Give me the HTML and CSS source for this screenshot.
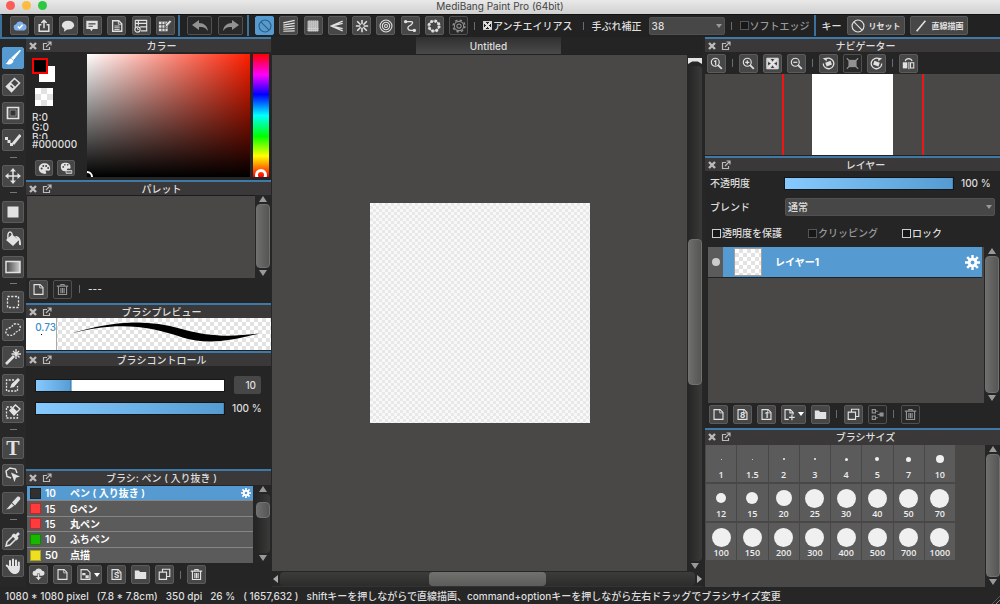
FILE: index.html
```html
<!DOCTYPE html>
<html lang="ja">
<head>
<meta charset="utf-8">
<title>MediBang Paint Pro (64bit)</title>
<link rel="stylesheet" href="styles.css">
</head>
<body>
<svg class="sprite" aria-hidden="true">
  <defs><linearGradient id="gg"><stop stop-color="#444"/><stop offset="1" stop-color="#ccc"/></linearGradient></defs>
  <symbol id="cloud" viewBox="0 0 16 16"><path d="M4 13a3.500 3.500 0 0 1-.5-6.900A4.500 4.500 0 0 1 12 5.500 3.800 3.800 0 0 1 12.500 13z" fill="#7fb0ea"/><path d="M5.500 8.500l2 2 3.500-4" fill="none" stroke="#fff" stroke-width="1.800"/></symbol>
  <symbol id="share" viewBox="0 0 16 16"><path d="M5 6.500H2.500v7.500h11V6.500H11M8 10.500V2M5 4.500L8 1.500l3 3" fill="none" stroke="currentColor" stroke-width="1.700"/></symbol>
  <symbol id="bubble" viewBox="0 0 16 16"><ellipse cx="8" cy="7" rx="7" ry="5" fill="currentColor"/><path d="M4 10l-.5 4.500L8 11z" fill="currentColor"/></symbol>
  <symbol id="note" viewBox="0 0 16 16"><path d="M1.500 2h13v9.500H9L7 14l-1-2.500H1.500z" fill="currentColor"/><path d="M4 5.500h8M4 8.300h5" stroke="#444" stroke-width="1.300"/></symbol>
  <symbol id="doc" viewBox="0 0 16 16"><path d="M3 2h7l3.500 3.500V14H3z" fill="none" stroke="currentColor" stroke-width="1.500"/><path d="M9.500 2v4h4M5 8h6M5 10h6M5 12h6" fill="none" stroke="currentColor"/></symbol>
  <symbol id="history" viewBox="0 0 16 16"><path d="M1.500 1.500h13v12H8M1.500 9V1.500M5 1.500v6M1.500 5h13M7 9h7" fill="none" stroke="currentColor" stroke-width="1.300"/><circle cx="4" cy="12" r="3" fill="#444" stroke="currentColor" stroke-width="1.300"/><path d="M4 10v2h1.500" fill="none" stroke="currentColor"/></symbol>
  <symbol id="gridpen" viewBox="0 0 16 16"><path d="M1 3h10v11H1z" fill="currentColor"/><path d="M1 6.500h10M1 10.500h10M4.500 3v11M8 3v11" stroke="#444"/><path d="M8 9.500l.8-3.500 4.700-5 2 2-5 5.500z" fill="currentColor" stroke="#444" stroke-width=".8"/></symbol>
  <symbol id="undo" viewBox="0 0 18 14"><path d="M1 6l7-5v3c5 0 8.500 3 9 8-3-4-5-4-9-4v3z" fill="currentColor"/></symbol>
  <symbol id="redo" viewBox="0 0 18 14"><path d="M17 6l-7-5v3C5 4 1.500 7 1 12c3-4 5-4 9-4v3z" fill="currentColor"/></symbol>
  <symbol id="off" viewBox="0 0 16 16"><circle cx="8" cy="8" r="6.800" fill="none" stroke="currentColor" stroke-width="1.300"/><path d="M3.300 3.300l9.400 9.400" stroke="currentColor" stroke-width="1.300"/></symbol>
  <symbol id="parallel" viewBox="0 0 16 16"><path d="M1.500 4.500l13-3M1.500 7l13-2.200M1.500 9.300l13-1.400M1.500 11.700l13-.9M1.500 14l13-.5" stroke="currentColor" stroke-width="1.400"/></symbol>
  <symbol id="mesh" viewBox="0 0 16 16"><path d="M1.500 3.500h13M1.500 5.800h13M1.500 8.100h13M1.500 10.400h13M1.500 12.700h13M3.500 1.500v13M5.800 1.500v13M8.100 1.500v13M10.400 1.500v13M12.700 1.500v13" stroke="currentColor" stroke-width="1.200"/></symbol>
  <symbol id="vanish" viewBox="0 0 16 16"><path d="M14.500 2.500L1.500 8l13 5.500M14.500 5L1.500 8l13 3" fill="none" stroke="currentColor" stroke-width="1.500"/></symbol>
  <symbol id="radial" viewBox="0 0 16 16"><path d="M8 1v5M8 10v5M1 8h5M10 8h5M2.500 2.500l4 4M9.500 9.500l4 4M13.500 2.500l-4 4M6.500 9.500l-4 4" stroke="currentColor" stroke-width="1.800"/></symbol>
  <symbol id="rings" viewBox="0 0 16 16"><g fill="none" stroke="currentColor" stroke-width="1.200"><circle cx="8" cy="8" r="6.800"/><circle cx="8" cy="8" r="4.200"/><circle cx="8" cy="8" r="1.700"/></g></symbol>
  <symbol id="curve" viewBox="0 0 16 16"><path d="M3 3h6c4 0 1 4-2 5-3 2-1 5 2 5h4" fill="none" stroke="currentColor" stroke-width="1.500"/><circle cx="3" cy="3" r="1.900" fill="currentColor"/><circle cx="13" cy="13" r="1.900" fill="currentColor"/></symbol>
  <symbol id="ringdots" viewBox="0 0 16 16"><circle cx="8" cy="8" r="5.800" fill="none" stroke="currentColor" stroke-width="1.200"/><circle cx="8" cy="8" r="5.800" fill="none" stroke="currentColor" stroke-width="3.400" stroke-dasharray="2.400 2.150"/></symbol>
  <symbol id="gearline" viewBox="0 0 16 16"><circle cx="8" cy="8" r="5.300" fill="none" stroke="currentColor" stroke-width="1.200"/><circle cx="8" cy="8" r="2.400" fill="none" stroke="currentColor" stroke-width="1.200"/><circle cx="8" cy="8" r="6.800" fill="none" stroke="currentColor" stroke-width="1.500" stroke-dasharray="2.670 2.670"/></symbol>
  <symbol id="line" viewBox="0 0 16 16"><path d="M3 14L13 2" stroke="currentColor" stroke-width="1.800"/></symbol>
  <symbol id="close" viewBox="0 0 10 10"><path d="M2 2l6 6M8 2L2 8" stroke="currentColor" stroke-width="2.400"/></symbol>
  <symbol id="pop" viewBox="0 0 10 10"><path d="M5 2.500H1.500v6h6V6M4 6l4.500-4.500M5.500 1H9v3.500" fill="none" stroke="currentColor" stroke-width="1.200"/></symbol>
  <symbol id="brush" viewBox="0 0 16 16"><path d="M15.500.5l-7 9L6.500 8l8-7.500z" fill="currentColor" stroke="currentColor"/><path d="M6 8.500l2.500 2C8.500 14 4 15.500.5 13.500 3.500 13 2.500 9 6 8.500z" fill="currentColor"/></symbol>
  <symbol id="eraser" viewBox="0 0 16 16"><path d="M9.500 1.500l5 4.500-8 8.500-5-5z" fill="none" stroke="currentColor" stroke-width="1.600"/><path d="M5.800 5.500l5 4.700-4.300 4.300-5-5z" fill="currentColor"/><path d="M5.500 8.500l2.500 2.300" stroke="#444" stroke-width="1.500"/></symbol>
  <symbol id="square" viewBox="0 0 16 16"><path d="M2.500 2.500h11v11h-11z" fill="none" stroke="currentColor" stroke-width="1.700"/><path d="M5 5h6v6H5z" fill="#333" stroke="#888"/></symbol>
  <symbol id="dotpen" viewBox="0 0 16 16"><path d="M0 5h3v3H0zM2.500 8h3v3h-3zM5 11h3v3H5z" fill="currentColor"/><path d="M15.500 3l-7.500 9" stroke="currentColor" stroke-width="2.800"/></symbol>
  <symbol id="move" viewBox="0 0 16 16"><path d="M8 2v12M2 8h12" stroke="currentColor" stroke-width="1.500"/><path d="M8 0l3 3.500H5zM8 16l3-3.500H5zM0 8l3.500-3v6zM16 8l-3.500-3v6z" fill="currentColor"/></symbol>
  <symbol id="solid" viewBox="0 0 16 16"><path d="M2.500 2.500h11v11h-11z" fill="currentColor"/></symbol>
  <symbol id="bucket" viewBox="0 0 16 16"><path d="M1 9l6-5.500L14 9l-6 6z" fill="currentColor"/><path d="M3 8c-.5-4 0-7 2-7s2.500 3 2.500 6" fill="none" stroke="currentColor" stroke-width="1.400"/><path d="M10 5c4 0 6 2 6 9-2 1-2.500-1-2-4z" fill="currentColor"/></symbol>
  <symbol id="grad" viewBox="0 0 16 16"><path d="M1 2.500h14v11H1z" fill="url(#gg)" stroke="currentColor" stroke-width="1.500"/></symbol>
  <symbol id="select" viewBox="0 0 16 16"><path d="M2.500 2.500h11v11h-11z" fill="none" stroke="currentColor" stroke-width="1.300" stroke-dasharray="2.200 1.470"/></symbol>
  <symbol id="lasso" viewBox="0 0 16 16"><path d="M9 2c5-1 7 2 6 5s-4 2-5 4-4 3-7 2-3-6 1-7 3-3 5-4z" fill="none" stroke="currentColor" stroke-width="1.300" stroke-dasharray="2 1.300"/></symbol>
  <symbol id="wand" viewBox="0 0 16 16"><path d="M1 15l8-8" stroke="currentColor" stroke-width="2.600"/><path d="M11 0v4M11 6v4M6.500 5H9M13 5h3M8 2l2 2M12.500 6.500l2 2M14 2l-2 2" stroke="currentColor" stroke-width="1.300"/><circle cx="11" cy="5" r="2" fill="currentColor"/></symbol>
  <symbol id="selpen" viewBox="0 0 16 16"><path d="M9 3H1.500v11h11V9" fill="none" stroke="currentColor" stroke-width="1.300" stroke-dasharray="2 1.300"/><path d="M5 11l1.500-4L13 1l2 2-6 7z" fill="currentColor"/></symbol>
  <symbol id="selerase" viewBox="0 0 16 16"><path d="M7 3H1.500v11h11V10" fill="none" stroke="currentColor" stroke-width="1.300" stroke-dasharray="2 1.300"/><path d="M10.500 1l4.500 4-6 6-4-4.500z" fill="#444" stroke="currentColor" stroke-width="1.500"/><path d="M8 3.500l4.500 4.200L9 11 5 6.500z" fill="currentColor"/></symbol>
  <symbol id="poly" viewBox="0 0 16 16"><path d="M6 11L2 9.500 1 4l4-3 5.500 1L12 6" fill="none" stroke="currentColor" stroke-width="1.400"/><path d="M6 5.500l9 4-4 1.300L9.500 15z" fill="currentColor"/></symbol>
  <symbol id="knife" viewBox="0 0 16 16"><path d="M7 7.500L12.500 1.500c2-.5 3.500 1 2.500 3l-5 6z" fill="currentColor"/><path d="M6.500 8l3 2.800L5 14l-4.500 1z" fill="currentColor" stroke="#444" stroke-width=".7"/></symbol>
  <symbol id="dropper" viewBox="0 0 16 16"><path d="M9.500 3.500l3 3L5 14l-4 1 1-4z" fill="none" stroke="currentColor" stroke-width="1.500"/><path d="M7.500 3.500l5 5M10.500 5.500L14 2" stroke="currentColor" stroke-width="2.600"/></symbol>
  <symbol id="hand" viewBox="0 0 16 16"><path d="M5 8.500V3M8 8V1.500M11 8V2.500M13.800 9V4.500M5.500 11L1.800 7.500" stroke="currentColor" stroke-width="2" stroke-linecap="round"/><path d="M4 8h10.800v2.500c0 3-2 5.500-4.800 5.500-3 0-4.500-1.500-7-5.500z" fill="currentColor"/></symbol>
  <symbol id="palette" viewBox="0 0 16 16"><path d="M8 1.500c4 0 7 2.500 7 6.500 0 3-2 3-4 2.500S9 11 10 12.500 9 15 7.500 14.500C4 14 1 12 1 8s3-6.500 7-6.500z" fill="currentColor"/><g fill="#444"><circle cx="4.500" cy="8" r="1.300"/><circle cx="6.500" cy="4.800" r="1.200"/><circle cx="10" cy="4.800" r="1.200"/><circle cx="12.500" cy="7.500" r="1.200"/></g></symbol>
  <symbol id="palettebar" viewBox="0 0 16 16"><path d="M7 1c4 0 6 2 6 5s-2 2-3 2-2 1-1 3c-5 1-8-1-8-5s2-5 6-5z" fill="currentColor"/><g fill="#444"><circle cx="4" cy="6" r="1.100"/><circle cx="6" cy="3.500" r="1"/><circle cx="9.500" cy="3.500" r="1"/></g><path d="M7.500 10.500h7V14h-7z" fill="#777" stroke="currentColor"/></symbol>
  <symbol id="page" viewBox="0 0 16 16"><path d="M2.500 2h7.500l3.500 3.500V14h-11z" fill="none" stroke="currentColor" stroke-width="1.400"/><path d="M9.500 2v4h4" fill="none" stroke="currentColor"/></symbol>
  <symbol id="trash" viewBox="0 0 16 16"><path d="M1 3.800h14M6 4V1.800h4V4M3 4v10.200h10V4M6 6v6.500M8 6v6.500M10 6v6.500" fill="none" stroke="currentColor" stroke-width="1.400"/></symbol>
  <symbol id="cloudget" viewBox="0 0 16 16"><path d="M3.500 9.500a3 3 0 0 1 .5-6 4.500 4.500 0 0 1 8.500 0 3 3 0 0 1 0 6z" fill="currentColor"/><path d="M6.700 7h2.600v4h2.700l-4 4.500L4 11h2.700z" stroke="#444" stroke-width=".7" fill="currentColor"/></symbol>
  <symbol id="folder" viewBox="0 0 16 16"><path d="M1 3h5l1.500 2H15v8.500H1z" fill="currentColor"/></symbol>
  <symbol id="copy" viewBox="0 0 16 16"><path d="M5.500 1.500h9v9h-9z" fill="none" stroke="currentColor" stroke-width="1.400"/><path d="M1.500 5h9v9h-9z" fill="#444" stroke="currentColor" stroke-width="1.400"/></symbol>
  <symbol id="pagemix" viewBox="0 0 16 16"><path d="M2.500 2h7.500l3.500 3.500V14h-11z" fill="none" stroke="currentColor" stroke-width="1.400"/><path d="M4 6h4v3H4zM8 9h4v3.500H8z" fill="currentColor"/></symbol>
  <symbol id="pageadd" viewBox="0 0 16 16"><path d="M7 14H2.500V2H9l3.500 3.500V8M8.500 2v4h4M11 8v7M7.500 11.500h7" fill="none" stroke="currentColor" stroke-width="1.400"/></symbol>
  <symbol id="merge" viewBox="0 0 16 16"><path d="M1.500 2h4v4h-4zM1.500 10h4v4h-4zM6 4h2.500M6 12h2.500M8 8h3" fill="none" stroke="currentColor" stroke-width="1.300"/><path d="M10.500 5.500h5v5h-5z" fill="currentColor"/></symbol>
  <symbol id="lens" viewBox="0 0 16 16"><circle cx="6.500" cy="6.500" r="4.900" fill="none" stroke="currentColor" stroke-width="1.400"/><path d="M10 10l4.500 4.500" stroke="currentColor" stroke-width="2.200"/></symbol>
  <symbol id="one" viewBox="0 0 16 16"><use href="#lens"/><path d="M5 5.500l2-1V10" fill="none" stroke="currentColor" stroke-width="1.500"/></symbol>
  <symbol id="plus" viewBox="0 0 16 16"><use href="#lens"/><path d="M4 6.500h5M6.500 4v5" stroke="currentColor" stroke-width="1.500"/></symbol>
  <symbol id="minus" viewBox="0 0 16 16"><use href="#lens"/><path d="M4 6.500h5" stroke="currentColor" stroke-width="1.500"/></symbol>
  <symbol id="fit" viewBox="0 0 16 16"><path d="M1 1.500h14v13H1z" fill="#ccc" stroke="currentColor" stroke-width="1.200"/><path d="M6 2.500h4L8 5.500zM6 13.500h4l-2-3zM2.500 6v4L6 8zM13.500 6v4L10 8z" fill="#3a3a3a"/><path d="M3 3l10 10M13 3L3 13" stroke="#f2f2f2" stroke-width="1.300"/></symbol>
  <symbol id="rotl" viewBox="0 0 16 16"><path d="M4 2.800A6.500 6.500 0 1 1 1.500 8" fill="none" stroke="currentColor" stroke-width="1.600"/><path d="M1 1.500l4.500-.5.500 4.500z" fill="currentColor"/><path d="M4 7l6.500-2.300 1.700 4.600-6.500 2.300z" fill="currentColor"/></symbol>
  <symbol id="rotr" viewBox="0 0 16 16"><path d="M12 2.800A6.500 6.500 0 1 0 14.500 8" fill="none" stroke="currentColor" stroke-width="1.600"/><path d="M15 1.500l-4.500-.5-.5 4.500z" fill="currentColor"/><path d="M12 7L5.500 4.700 3.800 9.300l6.500 2.300z" fill="currentColor"/></symbol>
  <symbol id="reset" viewBox="0 0 16 16"><path d="M3 3.500h10v9H3z" fill="currentColor"/><path d="M1 1.500l3 3M15 1.500l-3 3M1 14.500l3-3M15 14.500l-3-3" stroke="currentColor" stroke-width="1.500"/></symbol>
  <symbol id="flip" viewBox="0 0 16 16"><path d="M1 6.500h5.500V14H1z" fill="currentColor"/><path d="M10.500 7h4v6.500h-4zM4 5c1-4 7-4 8.500 0M8.500 6v9" fill="none" stroke="currentColor" stroke-width="1.300"/></symbol>
  <symbol id="gear" viewBox="0 0 16 16"><circle cx="8" cy="8" r="3.600" fill="none" stroke="currentColor" stroke-width="3"/><path d="M8 0v4M8 12v4M0 8h4M12 8h4M2.300 2.300l3 3M10.700 10.700l3 3M13.700 2.300l-3 3M5.300 10.700l-3 3" stroke="currentColor" stroke-width="2.600"/></symbol>
</svg>

<div class="app">
  <header class="titlebar">
    <div class="lights"><i class="red"></i><i class="amber"></i><i class="green"></i></div>
    <h1>MediBang Paint Pro (64bit)</h1>
  </header>

  <div class="toolbar">
    <div class="group files">
      <button class="btn" aria-label="クラウド"><svg><use href="#cloud"/></svg></button>
      <button class="btn" aria-label="共有"><svg><use href="#share"/></svg></button>
      <button class="btn" aria-label="コメント"><svg><use href="#bubble"/></svg></button>
      <button class="btn" aria-label="メモ"><svg><use href="#note"/></svg></button>
      <button class="btn" aria-label="文書"><svg><use href="#doc"/></svg></button>
      <button class="btn" aria-label="履歴"><svg><use href="#history"/></svg></button>
      <button class="btn" aria-label="編集"><svg><use href="#gridpen"/></svg></button>
    </div>
    <div class="group undo">
      <button class="btn dark wide" aria-label="元に戻す"><svg><use href="#undo"/></svg></button>
      <button class="btn dark wide" aria-label="やり直す"><svg><use href="#redo"/></svg></button>
    </div>
    <div class="group snaps">
      <button class="btn on" aria-label="スナップオフ"><svg><use href="#off"/></svg></button>
      <button class="btn" aria-label="平行"><svg><use href="#parallel"/></svg></button>
      <button class="btn" aria-label="十字"><svg><use href="#mesh"/></svg></button>
      <button class="btn" aria-label="消失点"><svg><use href="#vanish"/></svg></button>
      <button class="btn" aria-label="集中線"><svg><use href="#radial"/></svg></button>
      <button class="btn" aria-label="同心円"><svg><use href="#rings"/></svg></button>
      <button class="btn" aria-label="曲線"><svg><use href="#curve"/></svg></button>
      <button class="btn" aria-label="楕円"><svg><use href="#ringdots"/></svg></button>
      <button class="btn dark" aria-label="スナップ設定"><svg><use href="#gearline"/></svg></button>
    </div>
    <div class="options">
      <span class="sep"></span>
      <label class="check"><input type="checkbox" checked>アンチエイリアス</label>
      <span class="sep"></span>
      <label for="stab">手ぶれ補正</label>
      <span class="drop stab"><select id="stab"><option>38</option></select></span>
      <span class="sep"></span>
      <label class="check dim"><input type="checkbox" disabled>ソフトエッジ</label>
    </div>
    <div class="keys">
      <span>キー</span>
      <button class="btn labelled"><svg><use href="#off"/></svg>リセット</button>
      <button class="btn labelled"><svg><use href="#line"/></svg>直線描画</button>
    </div>
  </div>

  <main class="work">
    <nav class="tools" aria-label="ツール">
      <button class="btn on" aria-label="ブラシ"><svg><use href="#brush"/></svg></button>
      <button class="btn" aria-label="消しゴム"><svg><use href="#eraser"/></svg></button>
      <button class="btn" aria-label="図形"><svg><use href="#square"/></svg></button>
      <button class="btn" aria-label="ドット"><svg><use href="#dotpen"/></svg></button>
      <i></i>
      <button class="btn" aria-label="移動"><svg><use href="#move"/></svg></button>
      <i></i>
      <button class="btn" aria-label="塗り"><svg><use href="#solid"/></svg></button>
      <button class="btn" aria-label="バケツ"><svg><use href="#bucket"/></svg></button>
      <button class="btn" aria-label="グラデーション"><svg><use href="#grad"/></svg></button>
      <i></i>
      <button class="btn" aria-label="選択"><svg><use href="#select"/></svg></button>
      <button class="btn" aria-label="投げなわ"><svg><use href="#lasso"/></svg></button>
      <button class="btn" aria-label="自動選択"><svg><use href="#wand"/></svg></button>
      <button class="btn" aria-label="選択ペン"><svg><use href="#selpen"/></svg></button>
      <button class="btn" aria-label="選択消し"><svg><use href="#selerase"/></svg></button>
      <i></i>
      <button class="btn letter" aria-label="テキスト">T</button>
      <button class="btn" aria-label="操作"><svg><use href="#poly"/></svg></button>
      <button class="btn" aria-label="分割"><svg><use href="#knife"/></svg></button>
      <i></i>
      <button class="btn" aria-label="スポイト"><svg><use href="#dropper"/></svg></button>
      <button class="btn" aria-label="手のひら"><svg><use href="#hand"/></svg></button>
    </nav>

    <div class="side left">
      <section class="panel color">
        <div class="head"><svg><use href="#close"/></svg><svg><use href="#pop"/></svg><h2>カラー</h2></div>
        <div class="colorbody">
          <div class="colorinfo">
            <div class="swatches"><i class="back"></i><i class="fore"></i></div>
            <i class="clear checker"></i>
            <div class="rgb"><span>R:0</span><span>G:0</span><span>B:0</span></div>
            <div class="hex">#000000</div>
            <div class="pair">
              <button class="btn" aria-label="パレット"><svg><use href="#palette"/></svg></button>
              <button class="btn" aria-label="パレット追加"><svg><use href="#palettebar"/></svg></button>
            </div>
          </div>
          <div class="field"><i></i></div>
          <div class="hue"><i></i></div>
        </div>
      </section>

      <section class="panel palette">
        <div class="head"><svg><use href="#close"/></svg><svg><use href="#pop"/></svg><h2>パレット</h2></div>
        <div class="listwrap">
          <div class="well"></div>
          <div class="vscroll"><div class="track"><i></i></div></div>
        </div>
        <div class="foot">
          <button class="btn" aria-label="追加"><svg><use href="#page"/></svg></button>
          <button class="btn dark" aria-label="削除"><svg><use href="#trash"/></svg></button>
          <span class="sep"></span><span>---</span>
        </div>
      </section>

      <section class="panel preview">
        <div class="head"><svg><use href="#close"/></svg><svg><use href="#pop"/></svg><h2>ブラシプレビュー</h2></div>
        <div class="previewbody checker">
          <div class="size">0.73<i></i></div>
          <svg viewBox="0 0 213 32" preserveAspectRatio="none"><path d="M14 15.500C52 4 86 0 124 11c28 8 50 8 77 4.500-30 8-53 11-76 4C92 8 60 3 14 15.500z"/></svg>
        </div>
      </section>

      <section class="panel control">
        <div class="head"><svg><use href="#close"/></svg><svg><use href="#pop"/></svg><h2>ブラシコントロール</h2></div>
        <div class="sliders">
          <input class="range" type="range" min="0" max="100" value="18" aria-label="ブラシ幅" style="--fill:19%"><output class="num">10</output>
          <input class="range" type="range" value="100" aria-label="ブラシ不透明度" style="--fill:100%"><output>100 %</output>
        </div>
      </section>

      <section class="panel brushes">
        <div class="head"><svg><use href="#close"/></svg><svg><use href="#pop"/></svg><h2>ブラシ: ペン ( 入り抜き )</h2></div>
        <div class="listwrap">
          <ul class="brushlist">
            <li class="current"><i class="c1"></i><b>10</b><span>ペン ( 入り抜き )</span><svg><use href="#gear"/></svg></li>
            <li><i class="c2"></i><b>15</b><span>Gペン</span></li>
            <li><i class="c2"></i><b>15</b><span>丸ペン</span></li>
            <li><i class="c3"></i><b>10</b><span>ふちペン</span></li>
            <li><i class="c4"></i><b>50</b><span>点描</span></li>
          </ul>
          <div class="vscroll"><div class="track"><i></i></div></div>
        </div>
        <div class="foot">
          <button class="btn" aria-label="ダウンロード"><svg><use href="#cloudget"/></svg></button>
          <button class="btn" aria-label="新規ブラシ"><svg><use href="#page"/></svg></button>
          <button class="btn menu" aria-label="画像ブラシ"><svg><use href="#pagemix"/></svg></button>
          <button class="btn stamped" aria-label="スクリプト"><svg><use href="#page"/></svg><em>S</em></button>
          <button class="btn" aria-label="フォルダ"><svg><use href="#folder"/></svg></button>
          <button class="btn" aria-label="複製"><svg><use href="#copy"/></svg></button>
          <span class="sep"></span>
          <button class="btn" aria-label="削除"><svg><use href="#trash"/></svg></button>
        </div>
      </section>
    </div>

    <div class="document">
      <div class="tabs"><button class="tab">Untitled</button></div>
      <div class="stage">
        <div class="canvasarea"><div class="paper"></div></div>
        <div class="vscroll"><div class="track"><i></i></div></div>
      </div>
      <div class="hscroll"><div class="track"><i></i></div></div>
    </div>

    <div class="side right">
      <section class="panel navigator">
        <div class="head"><svg><use href="#close"/></svg><svg><use href="#pop"/></svg><h2>ナビゲーター</h2></div>
        <div class="navbar">
          <button class="btn" aria-label="等倍"><svg><use href="#one"/></svg></button>
          <span class="sep"></span>
          <button class="btn" aria-label="拡大"><svg><use href="#plus"/></svg></button>
          <button class="btn" aria-label="全体表示"><svg><use href="#fit"/></svg></button>
          <button class="btn" aria-label="縮小"><svg><use href="#minus"/></svg></button>
          <span class="sep"></span>
          <button class="btn" aria-label="左回転"><svg><use href="#rotl"/></svg></button>
          <button class="btn dark" aria-label="回転リセット"><svg><use href="#reset"/></svg></button>
          <button class="btn" aria-label="右回転"><svg><use href="#rotr"/></svg></button>
          <span class="sep"></span>
          <button class="btn" aria-label="左右反転"><svg><use href="#flip"/></svg></button>
        </div>
        <div class="map"><div class="view"><i></i></div></div>
      </section>

      <section class="panel layers">
        <div class="head"><svg><use href="#close"/></svg><svg><use href="#pop"/></svg><h2>レイヤー</h2></div>
        <div class="row"><label for="opacity">不透明度</label><input class="range" id="opacity" type="range" value="100" style="--fill:100%"><output>100 %</output></div>
        <div class="row"><label for="blend">ブレンド</label><span class="drop blend"><select id="blend"><option>通常</option></select></span></div>
        <div class="checks">
          <label class="check"><input type="checkbox">透明度を保護</label>
          <label class="check dim"><input type="checkbox" disabled>クリッピング</label>
          <label class="check"><input type="checkbox">ロック</label>
        </div>
        <div class="listwrap">
          <div class="well">
            <div class="layer"><span class="eye"><i></i></span><i class="thumb checker"></i><b>レイヤー1</b><svg><use href="#gear"/></svg></div>
          </div>
          <div class="vscroll"><div class="track"><i></i></div></div>
        </div>
        <div class="foot">
          <button class="btn" aria-label="新規レイヤー"><svg><use href="#page"/></svg></button>
          <button class="btn stamped" aria-label="8bitレイヤー"><svg><use href="#page"/></svg><em>8</em></button>
          <button class="btn stamped" aria-label="1bitレイヤー"><svg><use href="#page"/></svg><em>1</em></button>
          <button class="btn menu" aria-label="レイヤー追加"><svg><use href="#pageadd"/></svg></button>
          <button class="btn" aria-label="フォルダ"><svg><use href="#folder"/></svg></button>
          <span class="sep"></span>
          <button class="btn" aria-label="複製"><svg><use href="#copy"/></svg></button>
          <button class="btn dark" aria-label="結合"><svg><use href="#merge"/></svg></button>
          <span class="sep"></span>
          <button class="btn dark" aria-label="削除"><svg><use href="#trash"/></svg></button>
        </div>
      </section>

      <section class="panel sizes">
        <div class="head"><svg><use href="#close"/></svg><svg><use href="#pop"/></svg><h2>ブラシサイズ</h2></div>
        <div class="listwrap">
          <div class="well">
            <div class="sizegrid">
              <button><i style="--d:1px"></i>1</button><button><i style="--d:1px"></i>1.5</button><button><i style="--d:2px"></i>2</button><button><i style="--d:2px"></i>3</button><button><i style="--d:3px"></i>4</button><button><i style="--d:4px"></i>5</button><button><i style="--d:5px"></i>7</button><button><i style="--d:8px"></i>10</button>
              <button><i style="--d:10px"></i>12</button><button><i style="--d:12px"></i>15</button><button><i style="--d:16px"></i>20</button><button><i style="--d:19px"></i>25</button><button><i style="--d:19px"></i>30</button><button><i style="--d:19px"></i>40</button><button><i style="--d:19px"></i>50</button><button><i style="--d:19px"></i>70</button>
              <button><i style="--d:19px"></i>100</button><button><i style="--d:19px"></i>150</button><button><i style="--d:19px"></i>200</button><button><i style="--d:19px"></i>300</button><button><i style="--d:19px"></i>400</button><button><i style="--d:19px"></i>500</button><button><i style="--d:19px"></i>700</button><button><i style="--d:19px"></i>1000</button>
            </div>
          </div>
          <div class="vscroll"><div class="track"><i></i></div></div>
        </div>
      </section>
    </div>
  </main>

  <footer class="status">
    <span>1080 * 1080 pixel</span><span>(7.8 * 7.8cm)</span><span>350 dpi</span><span>26 %</span><span>( 1657,632 )</span><span>shiftキーを押しながらで直線描画、command+optionキーを押しながら左右ドラッグでブラシサイズ変更</span>
    <i class="grip"></i>
  </footer>
</div>
</body>
</html>
```
FILE: styles.css
```css
* { box-sizing: border-box; }
body, h1, h2, ul { margin: 0; padding: 0; }
body { background: #262626; color: #dedede; font: 500 10px/14px Inter, "Noto Sans CJK JP", sans-serif; overflow: hidden; }
h1, h2 { font-size: 10px; font-weight: 500; }
i, em { font-style: normal; }
button, select, input { font: inherit; color: inherit; margin: 0; }
.sprite { position: absolute; width: 0; height: 0; }
.app { display: flex; flex-direction: column; height: 100vh; }

.titlebar { position: relative; height: 14px; flex: none; background: linear-gradient(#e9e9e9, #d0d0d0); color: #444; display: flex; align-items: center; justify-content: center; padding-bottom: 2px; }
.titlebar h1 { font-weight: 400; line-height: 12px; }
.lights { position: absolute; left: 6px; top: 1px; display: flex; gap: 7px; }
.lights i { width: 9px; height: 9px; border-radius: 50%; }
.red { background: #fc5b57; }
.amber { background: #fdbb40; }
.green { background: #2bc840; }

.btn { width: 19px; height: 19px; flex: none; padding: 0; border: 1px solid #5b5b5b; border-radius: 2px; background: #474747; color: #e2e2e2; display: inline-flex; align-items: center; justify-content: center; }
.btn svg { width: 13px; height: 13px; }
.btn.dark { background: #292929; border-color: #505050; color: #929292; }
.btn.on { background: #559bd1; border-color: #559bd1; }
.btn.wide { width: 25px; }
.btn.wide svg { width: 18px; height: 14px; }
.btn.menu { width: 25px; gap: 2px; }
.btn.menu::after { content: ""; border: 3px solid transparent; border-top: 4px solid #fff; border-bottom: 0; }
.stamped { position: relative; }
.stamped em { position: absolute; inset: 2px 0 0; font: 700 8px/14px Inter, sans-serif; text-align: center; }
.sep { width: 1px; height: 8px; background: #666b76; flex: none; }

.toolbar { height: 23px; flex: none; display: flex; align-items: center; padding-bottom: 1px; border-top: 1px solid #111; border-left: 2px solid #3c719b; background: #222; }
.group { display: flex; justify-content: space-between; flex: none; }
.files { width: 165px; margin: 0 3px 0 8px; }
.undo { width: 71px; height: 21px; align-items: center; padding: 0 4px 0 7px; border: 1px solid #3c719b; border-width: 0 2px; }
.snaps { width: 213px; margin-left: 6px; }
.toolbar .btn svg { height: 14px; width: 14px; }
.toolbar .btn.wide svg { width: 18px; }
.toolbar .on { color: #2f607f; }
.options { flex: none; display: flex; align-items: center; padding-left: 6px; }
.options .sep { margin-right: 8px; }
.options .check { margin-right: 10px; }
.options .stab { width: 76px; margin: 0 6px 0 7px; }
.check { display: inline-flex; align-items: center; gap: 1px; white-space: nowrap; }
.check input { appearance: none; width: 9px; height: 9px; border: 1px solid #ccc; background: #171717; }
.check input:checked { background: linear-gradient(45deg, transparent 42%, #ddd 42% 58%, transparent 58%), linear-gradient(-45deg, #222 42%, #ddd 42% 58%, #222 58%); }
.dim { color: #999; }
.dim input { border-color: #555; }
.drop { position: relative; display: block; }
.drop::after { content: ""; position: absolute; right: 3px; top: 7px; border: 3px solid transparent; border-top: 4px solid #999; border-bottom: 0; pointer-events: none; }
.drop select { display: block; appearance: none; width: 100%; height: 18px; padding: 0 2px; background: #474747; border: 1px solid #515151; border-radius: 2px; }
.keys { display: flex; align-items: center; gap: 5px; height: 21px; border-left: 2px solid #3c719b; padding-left: 6px; margin-left: -6px; white-space: nowrap; }
.labelled { width: 58px; gap: 4px; font-size: 8px; font-weight: 700; }

.work { flex: 1; min-height: 0; display: flex; background: #282828; }
.tools { width: 26px; flex: none; display: flex; flex-direction: column; justify-content: space-between; align-items: center; padding: 8px 1px 10px; border-top: 2px solid #3c719b; }
.tools .btn { width: 22px; height: 22px; }
.tools .btn svg { width: 16px; height: 16px; }
.tools .on { color: #fff; }
.tools i { width: 7px; height: 3px; border-top: 1px solid #777; }
.tools .letter { font: 700 20px/20px "Liberation Serif", serif; }

.side { flex: none; display: flex; flex-direction: column; min-height: 0; }
.left { width: 245px; }
.right { width: 295px; }
.panel { display: flex; flex-direction: column; border-top: 2px solid #3f79a8; min-height: 0; flex: none; background: #252525; }
.head { display: flex; align-items: center; height: 13px; flex: none; background: #3a3838; padding-left: 2px; color: #bbb; gap: 4px; }
.head svg { width: 10px; height: 10px; }
.head h2 { flex: 1; text-align: center; color: #dedede; line-height: 12px; white-space: pre; padding-right: 4px; }
.listwrap { flex: 1; min-height: 0; display: flex; }
.well { flex: 1; min-width: 0; background: #4a4846; }
.foot { display: flex; align-items: center; gap: 5px; height: 23px; flex: none; padding-left: 3px; }
.foot .sep { margin: 0 1px; }

.checker { background: repeating-conic-gradient(#e2e2e2 0 25%, #fff 0 50%) 0 0 / 8px 8px; }

.vscroll { width: 16px; flex: none; display: flex; flex-direction: column; align-items: center; justify-content: space-between; padding: 1px 0 2px; background: #262626; }
.vscroll::before, .vscroll::after { content: ""; border: 4px solid transparent; }
.vscroll::before { border-top: 0; border-bottom: 6px solid #999; }
.vscroll::after { border-bottom: 0; border-top: 6px solid #999; }
.vscroll .track { flex: 1; width: 14px; margin: 2px 0; border-radius: 4px; background: linear-gradient(90deg, #252525, #3a3a38); display: flex; flex-direction: column; }
.vscroll .track i { flex: 1; border-radius: 4px; background: linear-gradient(90deg, #6e6e6c, #555553); border: 1px solid #717171; }

.color { height: 143px; }
.colorbody { flex: 1; display: flex; padding: 2px 2px 3px 0; }
.colorinfo { width: 61px; padding: 4px 0 0 6px; display: flex; flex-direction: column; line-height: 10px; }
.swatches { position: relative; height: 25px; }
.swatches i { position: absolute; width: 16px; height: 16px; }
.back { left: 7px; top: 8px; background: #fff; }
.fore { left: 0; top: 0; background: #000; border: 2px solid #f00; }
.clear { width: 18px; height: 18px; margin: 5px 2px 6px 3px; background-size: 12px 12px; }
.rgb { display: flex; flex-direction: column; height: 27px; overflow: hidden; flex: none; }
.hex { height: 10px; }
.pair { display: flex; gap: 4px; margin: 11px 0 0 3px; }
.pair .btn { width: 18px; height: 16px; }
.field { flex: 1; position: relative; overflow: hidden; background: linear-gradient(transparent, #000), linear-gradient(90deg, #fff, #ff1e00); }
.field i { position: absolute; left: -6px; bottom: -6px; width: 12px; height: 12px; border: 2px solid #fff; border-radius: 50%; }
.hue { width: 16px; margin-left: 3px; position: relative; overflow: hidden; background: linear-gradient(#f00, #f0f 17%, #00f 33%, #0ff 50%, #0f0 67%, #ff0 83%, #f00); }
.hue i { position: absolute; left: 2px; bottom: -4px; width: 12px; height: 12px; border: 3px solid #fff; border-radius: 50%; }

.palette { height: 123px; }
.palette .well { margin-left: 1px; border-top: 1px solid #1c1c1c; }
.palette .foot { height: 25px; padding-bottom: 3px; }
.palette .foot .sep { margin: 0 3px 0 2px; }

.preview { height: 48px; }
.previewbody { flex: 1; display: flex; min-height: 0; border-bottom: 1px solid #222; }
.previewbody svg { flex: 1; min-width: 0; height: 32px; fill: #000; }
.size { width: 31px; background: #fff; border-right: 1px solid #aaa; color: #3e8ec9; text-align: right; padding-top: 2px; position: relative; }
.size i { position: absolute; left: 15px; top: 16px; width: 1px; height: 1px; background: #000; }

.control { height: 118px; }
.sliders { display: grid; grid-template-columns: 190px 1fr; column-gap: 9px; row-gap: 5px; padding: 10px 8px 0 9px; align-items: center; }
.range { appearance: none; display: block; height: 13px; width: 100%; background: linear-gradient(90deg, #86caff, #559bd1) 0 0 / var(--fill) 100% no-repeat #fff; border: 1px solid #161616; }
.range::-webkit-slider-thumb { appearance: none; width: 1px; height: 11px; background: #4489bb; }
.sliders output { height: 18px; line-height: 18px; font-size: 10px; white-space: nowrap; margin-left: -2px; }
.sliders .num { background: #474747; border-radius: 2px; width: 27px; margin-left: 0; padding-right: 5px; text-align: right; }

.brushes { flex: 1; }
.brushlist { flex: 1; list-style: none; display: grid; grid-template-rows: repeat(5, 1fr); margin: 1px 2px 0 1px; background: #5b5b5b; overflow: hidden; font-weight: 600; color: #fff; }
.brushlist li { display: flex; align-items: center; border-bottom: 1px solid #858585; padding: 0 2px 0 3px; min-height: 0; line-height: 14px; }
.brushlist li:last-child { border: 0; }
.brushlist i { width: 11px; height: 11px; border: 1px solid #0004; }
.brushlist b { width: 25px; margin-left: 4px; font-weight: 600; }
.brushlist span { flex: 1; white-space: pre; }
.brushlist svg { width: 10px; height: 10px; }
.brushlist .current { background: #559bd1; }
.c1 { background: #303030; }
.c2 { background: #ff3b3b; }
.c3 { background: #18b800; }
.c4 { background: #eee020; }
.brushes .track i { flex: 0 0 16px; margin-top: 8px; }
.brushes .head { height: 14px; }
.brushes .foot { height: 24px; padding-bottom: 1px; }

.document { flex: 1; min-width: 0; display: flex; flex-direction: column; background: #4a4846; border: 1px solid #262626; border-width: 0 2px 0 1px; }
.tabs { height: 18px; flex: none; background: #242424; padding: 0 0 0 144px; border-bottom: 1px solid #222; }
.tab { display: block; width: 145px; height: 17px; border: 0; padding: 0; background: linear-gradient(#303030, #4a4a4a); }
.stage { flex: 1; min-height: 0; display: flex; }
.canvasarea { flex: 1; display: grid; place-items: center; }
.paper { width: 220px; height: 220px; background: repeating-conic-gradient(#e8e8e8 0 25%, #f8f8f8 0 50%) 0 0 / 6px 6px; }
.stage .vscroll { padding-top: 3px; }
.stage .vscroll::before { width: 14px; height: 6px; border: 0; background: #e4e4e4; clip-path: polygon(0 0, 100% 0, 100% 100%, 70% 60%, 30% 60%, 0 100%); }
.stage .track::before { content: ""; flex: 174; }
.stage .track i { flex: 145; }
.stage .track::after { content: ""; flex: 177; }
.hscroll { height: 16px; flex: none; display: flex; align-items: center; background: #262626; padding: 0 1px; border-bottom: 1px solid #333; }
.hscroll::before, .hscroll::after { content: ""; border: 4px solid transparent; }
.hscroll::before { border-left: 0; border-right: 5px solid #aaa; }
.hscroll::after { border-right: 0; border-left: 5px solid #aaa; }
.hscroll .track { flex: 1; height: 14px; margin: 0 2px; border-radius: 4px; background: linear-gradient(#3c3c3a, #2c2c2a); display: flex; }
.hscroll .track::before { content: ""; flex: 149; }
.hscroll .track i { flex: 117; border-radius: 4px; background: linear-gradient(#71716f, #5c5c5a); }
.hscroll .track::after { content: ""; flex: 149; }

.navigator { height: 119px; }
.navbar { height: 22px; flex: none; display: flex; align-items: center; gap: 5px; padding-left: 2px; }
.navbar .sep { margin: 0 1px; }
.map { flex: 1; background: #4a4846; display: flex; justify-content: center; border-bottom: 1px solid #222; }
.view { width: 142px; border: 2px solid #f21414; border-width: 0 2px; box-shadow: 1px 0 #2f5a5c; display: flex; justify-content: center; }
.view i { width: 81px; background: #fff; }
.layers { height: 272px; }
.row { height: 24px; flex: none; display: flex; align-items: center; padding: 0 5px; }
.row label { width: 74px; }
.row .range { flex: none; width: 170px; height: 13px; }
.row output { margin-left: 7px; white-space: nowrap; }
.row .blend { flex: 1; margin-left: 1px; }
.checks { height: 28px; flex: none; display: grid; grid-template-columns: 96px 94px auto; align-items: center; padding-left: 7px; }
.layers .well { margin-left: 3px; }
.layer { height: 31px; display: flex; align-items: center; background: #559bd1; border-bottom: 1px solid #222; color: #fff; padding-right: 2px; margin-right: 2px; }
.layer b { flex: 1; margin-left: 13px; }
.layer svg { width: 15px; height: 15px; }
.eye { width: 15px; height: 30px; background: #5b5b5b; display: grid; place-items: center; }
.eye i { width: 8px; height: 8px; border-radius: 50%; background: #ccc; }
.thumb { width: 28px; height: 28px; margin-left: 11px; border: 1px solid #a0a0a0; }
.layers .foot { padding-left: 4px; height: 25px; padding-bottom: 3px; }
.layers .foot .sep { margin: 0 2px 0 1px; }
.sizes { flex: 1; }
.sizes .head { height: 15px; padding-bottom: 2px; }
.sizes .vscroll { width: 15px; }
.sizegrid { display: grid; grid-template-columns: repeat(8, 1fr); gap: 2px 1px; width: 249px; margin-left: 1px; }
.sizegrid button { height: 37px; min-width: 0; padding: 4px 0 0; border: 0; background: #5b5b5b; color: #eee; font: 600 9px/12px "Open Sans", sans-serif; display: grid; grid-template-rows: 20px 12px; align-content: start; justify-items: center; align-items: center; }
.sizegrid i { width: var(--d); height: var(--d); border-radius: 50%; background: #f0f0f0; }

.status { height: 17px; flex: none; display: flex; align-items: center; gap: 8px; padding-left: 5px; background: #262626; white-space: pre; position: relative; }
.grip { position: absolute; right: 0; bottom: 0; width: 8px; height: 8px; background: repeating-linear-gradient(135deg, transparent 0 2px, #888 2px 3px); clip-path: polygon(100% 0, 100% 100%, 0 100%); }
```
